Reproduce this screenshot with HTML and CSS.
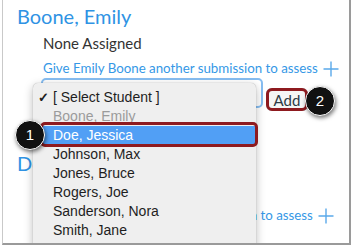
FILE: index.html
```html
<!DOCTYPE html>
<html>
<head>
<meta charset="utf-8">
<link rel="stylesheet" href="styles.css">
</head>
<body>
<div class="frame">
  <section class="student">
    <h2 class="name">Boone, Emily</h2>
    <div class="assigned">None Assigned</div>
    <a class="give">Give Emily Boone another submission to assess
      <svg class="plus" width="16" height="16" viewBox="0 0 16 16"><path d="M8 0.5V15.5M0.5 8H15.5" stroke="#5aa9ea" stroke-width="1.4" fill="none"/></svg>
    </a>
    <div class="pick">
      <div class="select">
        <svg class="arrows" width="7" height="13" viewBox="0 0 7 13"><path d="M3.5 0.5L6.5 5H0.5Z M3.5 12.5L6.5 8H0.5Z" fill="#444"/></svg>
      </div>
      <button class="add">Add</button>
    </div>
  </section>
  <section class="student second">
    <h2 class="name">Doe, Jessica</h2>
    <div class="assigned">None Assigned</div>
    <a class="give">Give Jessica Doe another submission to assess
      <svg class="plus" width="16" height="16" viewBox="0 0 16 16"><path d="M8 0.5V15.5M0.5 8H15.5" stroke="#5aa9ea" stroke-width="1.4" fill="none"/></svg>
    </a>
  </section>

  <ul class="menu">
    <li class="opt checked"><span class="check">✓</span>[ Select Student ]</li>
    <li class="opt disabled">Boone, Emily</li>
    <li class="opt active">Doe, Jessica</li>
    <li class="opt">Johnson, Max</li>
    <li class="opt">Jones, Bruce</li>
    <li class="opt">Rogers, Joe</li>
    <li class="opt">Sanderson, Nora</li>
    <li class="opt">Smith, Jane</li>
  </ul>
  <div class="mark mark-row"></div>
  <div class="mark mark-add"></div>
  <div class="callout callout-1">1</div>
  <div class="callout callout-2">2</div>
</div>
</body>
</html>
```
FILE: styles.css
```css
html, body {
  margin: 0;
  padding: 0;
  background: #fff;
}
.frame {
  position: relative;
  box-sizing: border-box;
  margin-left: 2px;
  width: 349px;
  height: 245px;
  overflow: hidden;
  border-left: 1px solid #c9c9c9;
  border-right: 2px solid #9a9a9a;
  border-bottom: 2px solid #9a9a9a;
  padding: 4px 0 0 14px;
  font-family: Lato, "Open Sans", sans-serif;
}
.student {
  display: flex;
  flex-direction: column;
  align-items: flex-start;
}
.second {
  margin-top: 40px;
}
.name {
  margin: 0;
  font-size: 20px;
  line-height: 24px;
  font-weight: 400;
  color: #2f93e4;
}
.assigned {
  margin: 5px 0 0 26px;
  font-size: 15px;
  line-height: 20px;
  color: #333;
}
.give {
  margin: 6px 0 0 26px;
  font-size: 13.3px;
  line-height: 18px;
  color: #3598e6;
  display: flex;
  align-items: center;
  gap: 5px;
  white-space: nowrap;
}
.plus {
  display: block;
  flex: none;
  margin-top: 1px;
}
.pick {
  margin: 1px 0 0 24px;
  display: flex;
  align-items: flex-start;
  gap: 3px;
}
.select {
  box-sizing: border-box;
  width: 222px;
  height: 30px;
  border: 2px solid #86bdf1;
  border-radius: 5px;
  background: #fff;
  display: flex;
  justify-content: flex-end;
  align-items: center;
  padding-right: 5px;
}
.arrows {
  display: block;
}
.add {
  box-sizing: border-box;
  height: 23px;
  width: 42px;
  margin-top: 10px;
  padding: 0;
  border: 1px solid #c7cdd1;
  border-radius: 5px;
  background: #f5f5f5;
  font-family: Lato, sans-serif;
  font-size: 15px;
  color: #2d3b45;
}
.menu {
  position: absolute;
  left: 30px;
  top: 83px;
  width: 223px;
  margin: 0;
  padding: 5px 0 20px;
  list-style: none;
  background: #efefef;
  border-radius: 5px;
  box-shadow: 0 0 1px rgba(0,0,0,0.35), 0 3px 10px rgba(0,0,0,0.28);
  font-family: "Liberation Sans", Arial, sans-serif;
  font-size: 14px;
}
.opt {
  position: relative;
  height: 19px;
  line-height: 19px;
  padding-left: 20px;
  color: #1e1e1e;
}
.check {
  position: absolute;
  left: 5px;
  top: 0;
  font-size: 13px;
  font-weight: bold;
}
.disabled {
  color: #9b9b9b;
}
.active {
  background: #519ff5;
  color: #fff;
}
.mark {
  position: absolute;
  box-sizing: border-box;
  border: 3px solid #8e1a1f;
}
.mark-row {
  left: 37px;
  top: 122px;
  width: 218px;
  height: 25px;
  border-radius: 5px;
}
.mark-add {
  left: 263px;
  top: 88px;
  width: 42px;
  height: 23px;
  border-radius: 6px;
}
.callout {
  position: absolute;
  box-sizing: border-box;
  width: 30px;
  height: 30px;
  border-radius: 50%;
  background: #111;
  border: 1.5px solid #fff;
  box-shadow: 1px 2px 4px rgba(0,0,0,0.55);
  color: #fff;
  font-family: "Liberation Sans", Arial, sans-serif;
  font-size: 15px;
  line-height: 27px;
  text-align: center;
}
.callout-1 {
  left: 12px;
  top: 120px;
}
.callout-2 {
  left: 302px;
  top: 86px;
}
```
